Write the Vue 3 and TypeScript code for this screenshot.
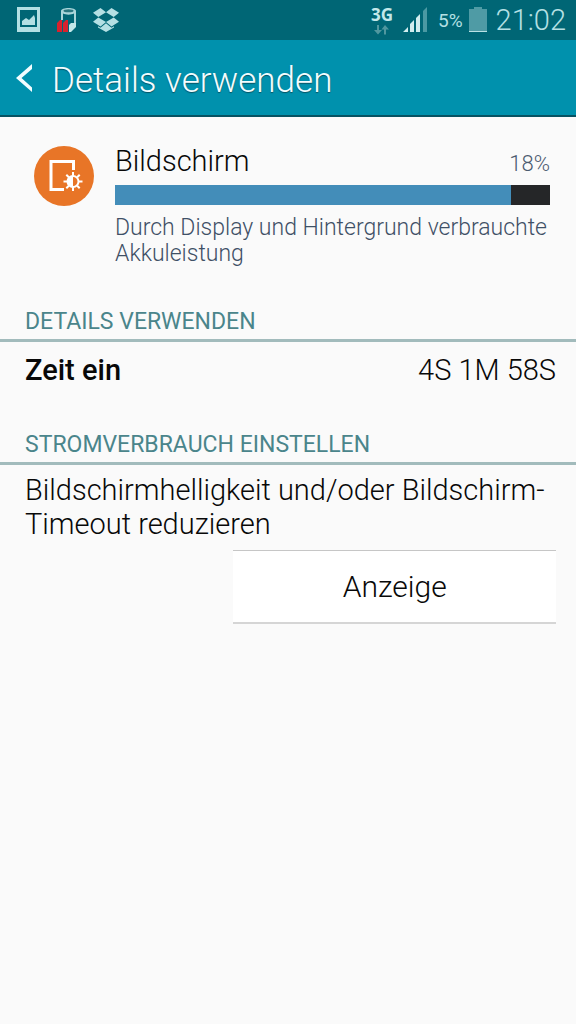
<script setup lang="ts">
const usage = { name: 'Bildschirm', percent: 18, fill: 91 }
</script>

<template>
  <div class="screen">
    <div class="status">
      <div class="group left">
        <svg width="24" height="26" viewBox="0 0 24 26">
          <path fill="#b4e0e4" fill-rule="evenodd" d="M0 0h23v25H0zM3 3v17h17V3z" />
          <path fill="#b4e0e4" d="M5 18v-4l4-3 3 2 5-5 1 3v7z" />
        </svg>
        <svg width="22" height="26" viewBox="0 0 22 26">
          <path fill="#a9d5da" fill-rule="evenodd" d="M5 4C5 0 20 0 20 4V18h-2V6.500C15 8 10 8 7 6.500V13H5z" />
          <ellipse cx="12.500" cy="3.800" rx="5" ry="1.500" fill="#297780" />
          <path fill="#d7222d" d="M1 16l3-3h2v12H1zM7 16l3-3h2v12H7z" />
          <path fill="#c3e8ea" d="M13 25v-7l2-2h5v4l-5 5z" />
        </svg>
        <svg width="26" height="24" viewBox="0 0 26 24">
          <path fill="#b4e0e4" d="M7.500 0 13 4.300 5.300 9 0 4.700zM18.500 0 26 4.700 20.700 9 13 4.300zM5.300 9.500 13 14.100 7.500 18.500 0 13.700zM20.700 9.500 26 13.700 18.500 18.500 13 14.100zM13 15.200l5.500 4.500 2.500-1.500v1.200L13 24l-8-4.600v-1.200l2.500 1.500z" />
        </svg>
      </div>
      <div class="group right">
        <div class="network">
          <span>3G</span>
          <svg width="16" height="10" viewBox="0 0 16 10">
            <path fill="#50979f" d="M3 0h2v5h3L4 9.500 0 5h3zM10 9.500h2V4.500h3L11 0 7.500 4.500H10z" />
          </svg>
        </div>
        <svg width="27" height="26" viewBox="0 0 27 26">
          <path fill="#d2edef" d="M1 25l5-5v5zM8 17l4-4v12H8zM14 11l4-4v18h-4z" />
          <path fill="#4b99a3" d="M21 4l4-4v25h-4z" />
        </svg>
        <div class="battery">
          <span class="charge">5%</span>
          <svg width="18" height="26" viewBox="0 0 18 26">
            <path fill="#4f9ba5" d="M5 0h8v2h5v22H0V2h5z" />
            <path fill="#b9e1e4" d="M0 24h18v1H0z" />
          </svg>
        </div>
        <span class="clock">21:02</span>
      </div>
    </div>

    <header class="bar">
      <button class="back" type="button" aria-label="Zurück">
        <svg width="18" height="30" viewBox="0 0 18 30">
          <path fill="#f2fdff" d="M16 1v5L5.500 15 16 24.500V29L0 15z" />
        </svg>
      </button>
      <h1>Details verwenden</h1>
    </header>

    <main>
      <section class="summary">
        <svg class="app-icon" width="60" height="60" viewBox="0 0 60 60">
          <circle cx="30" cy="30" r="30" fill="#e87527" />
          <path fill="none" stroke="#fff" stroke-width="3" d="M39.500 24V15.500h-22.500v28H30" />
          <g stroke="#fff" stroke-width="2">
            <path d="M39 26v4M39 41v4M29.500 35.500h4M44.500 35.500h4M32.300 28.800l2.500 2.500M43.200 39.700l2.500 2.500M32.300 42.200l2.500-2.500M43.200 31.300l2.500-2.500" />
            <circle cx="39" cy="35.500" r="5.500" fill="#e87527" />
          </g>
          <path fill="#fff" d="M39 29.500a6 6 0 0 0 0 12z" />
        </svg>
        <div class="info">
          <div class="line">
            <h2>{{ usage.name }}</h2>
            <span class="percent">{{ usage.percent }}%</span>
          </div>
          <div class="track">
            <div class="fill" :style="{ width: usage.fill + '%' }"></div>
          </div>
          <p class="description">Durch Display und Hintergrund verbrauchte Akkuleistung</p>
        </div>
      </section>

      <section class="details">
        <h3>DETAILS VERWENDEN</h3>
        <dl class="row">
          <dt>Zeit ein</dt>
          <dd>4S 1M 58S</dd>
        </dl>
      </section>

      <section class="adjust">
        <h3>STROMVERBRAUCH EINSTELLEN</h3>
        <p class="hint">Bildschirmhelligkeit und/oder Bildschirm-Timeout reduzieren</p>
        <button class="action" type="button">Anzeige</button>
      </section>
    </main>
  </div>
</template>

<style>
body {
  margin: 0;
  background: #fafafa;
}
</style>

<style scoped>
.screen {
  min-height: 100vh;
  background: #fafafa;
  color: #080808;
  font-family: Roboto, "Liberation Sans", sans-serif;
  font-weight: 300;
}
h1, h2, h3, p, dl, dd {
  margin: 0;
  font-weight: 300;
}
button {
  border: 0;
  padding: 0;
  font: inherit;
  color: inherit;
}
svg {
  display: block;
  flex: none;
}
.status {
  display: flex;
  justify-content: space-between;
  height: 40px;
  padding: 0 10px 0 17px;
  background: #006675;
  color: #b4e0e4;
}
.group {
  display: flex;
  align-items: center;
}
.left {
  gap: 15px;
}
.right {
  gap: 9px;
}
.network {
  display: flex;
  flex-direction: column;
  align-items: center;
  gap: 2px;
  font: 700 17px/17px "Noto Sans", sans-serif;
  color: #c3e8ea;
}
.battery {
  display: flex;
  align-items: center;
  gap: 6px;
}
.charge {
  font-size: 19px;
  font-weight: 400;
}
.clock {
  font-size: 29px;
}
.bar {
  display: flex;
  align-items: center;
  gap: 18px;
  height: 75px;
  padding-left: 16px;
  background: #0091ad;
  border-bottom: 2px solid #075363;
  color: #f2fdff;
}
.back {
  background: none;
}
h1 {
  font-size: 35px;
  line-height: 42px;
  padding-top: 6px;
  text-shadow: 0 1px 1px #075363;
}
.summary {
  display: flex;
  gap: 21px;
  padding: 27px 26px 0 34px;
}
.app-icon {
  margin-top: 2px;
}
.info {
  flex: 1;
}
.line {
  display: flex;
  justify-content: space-between;
  align-items: baseline;
}
h2 {
  font-size: 29px;
  line-height: 34px;
}
.percent {
  font-size: 22px;
  color: #4b5b70;
}
.track {
  height: 20px;
  margin-top: 7px;
  background: #252628;
}
.fill {
  height: 100%;
  background: #438db9;
}
.description {
  margin-top: 10px;
  font-size: 23px;
  line-height: 26px;
  color: #3f5066;
}
h3 {
  padding: 0 25px 3px;
  border-bottom: 3px solid #a2bbbc;
  font-size: 23px;
  line-height: 28px;
  font-weight: 400;
  color: #4a858b;
}
.details {
  margin-top: 41px;
}
.row {
  display: flex;
  justify-content: space-between;
  padding: 11px 20px 0 25px;
  font-size: 29px;
  line-height: 34px;
}
.row dt {
  font-weight: 500;
}
.adjust {
  display: flex;
  flex-direction: column;
  margin-top: 44px;
}
.hint {
  padding: 8px 20px 0 25px;
  font-size: 29px;
  line-height: 34px;
}
.action {
  align-self: flex-end;
  width: 56%;
  height: 74px;
  margin: 9px 20px 0 0;
  background: #fff;
  border-top: 1px solid #c6c6c6;
  border-bottom: 2px solid #d5d5d5;
  font-size: 30px;
}
</style>
